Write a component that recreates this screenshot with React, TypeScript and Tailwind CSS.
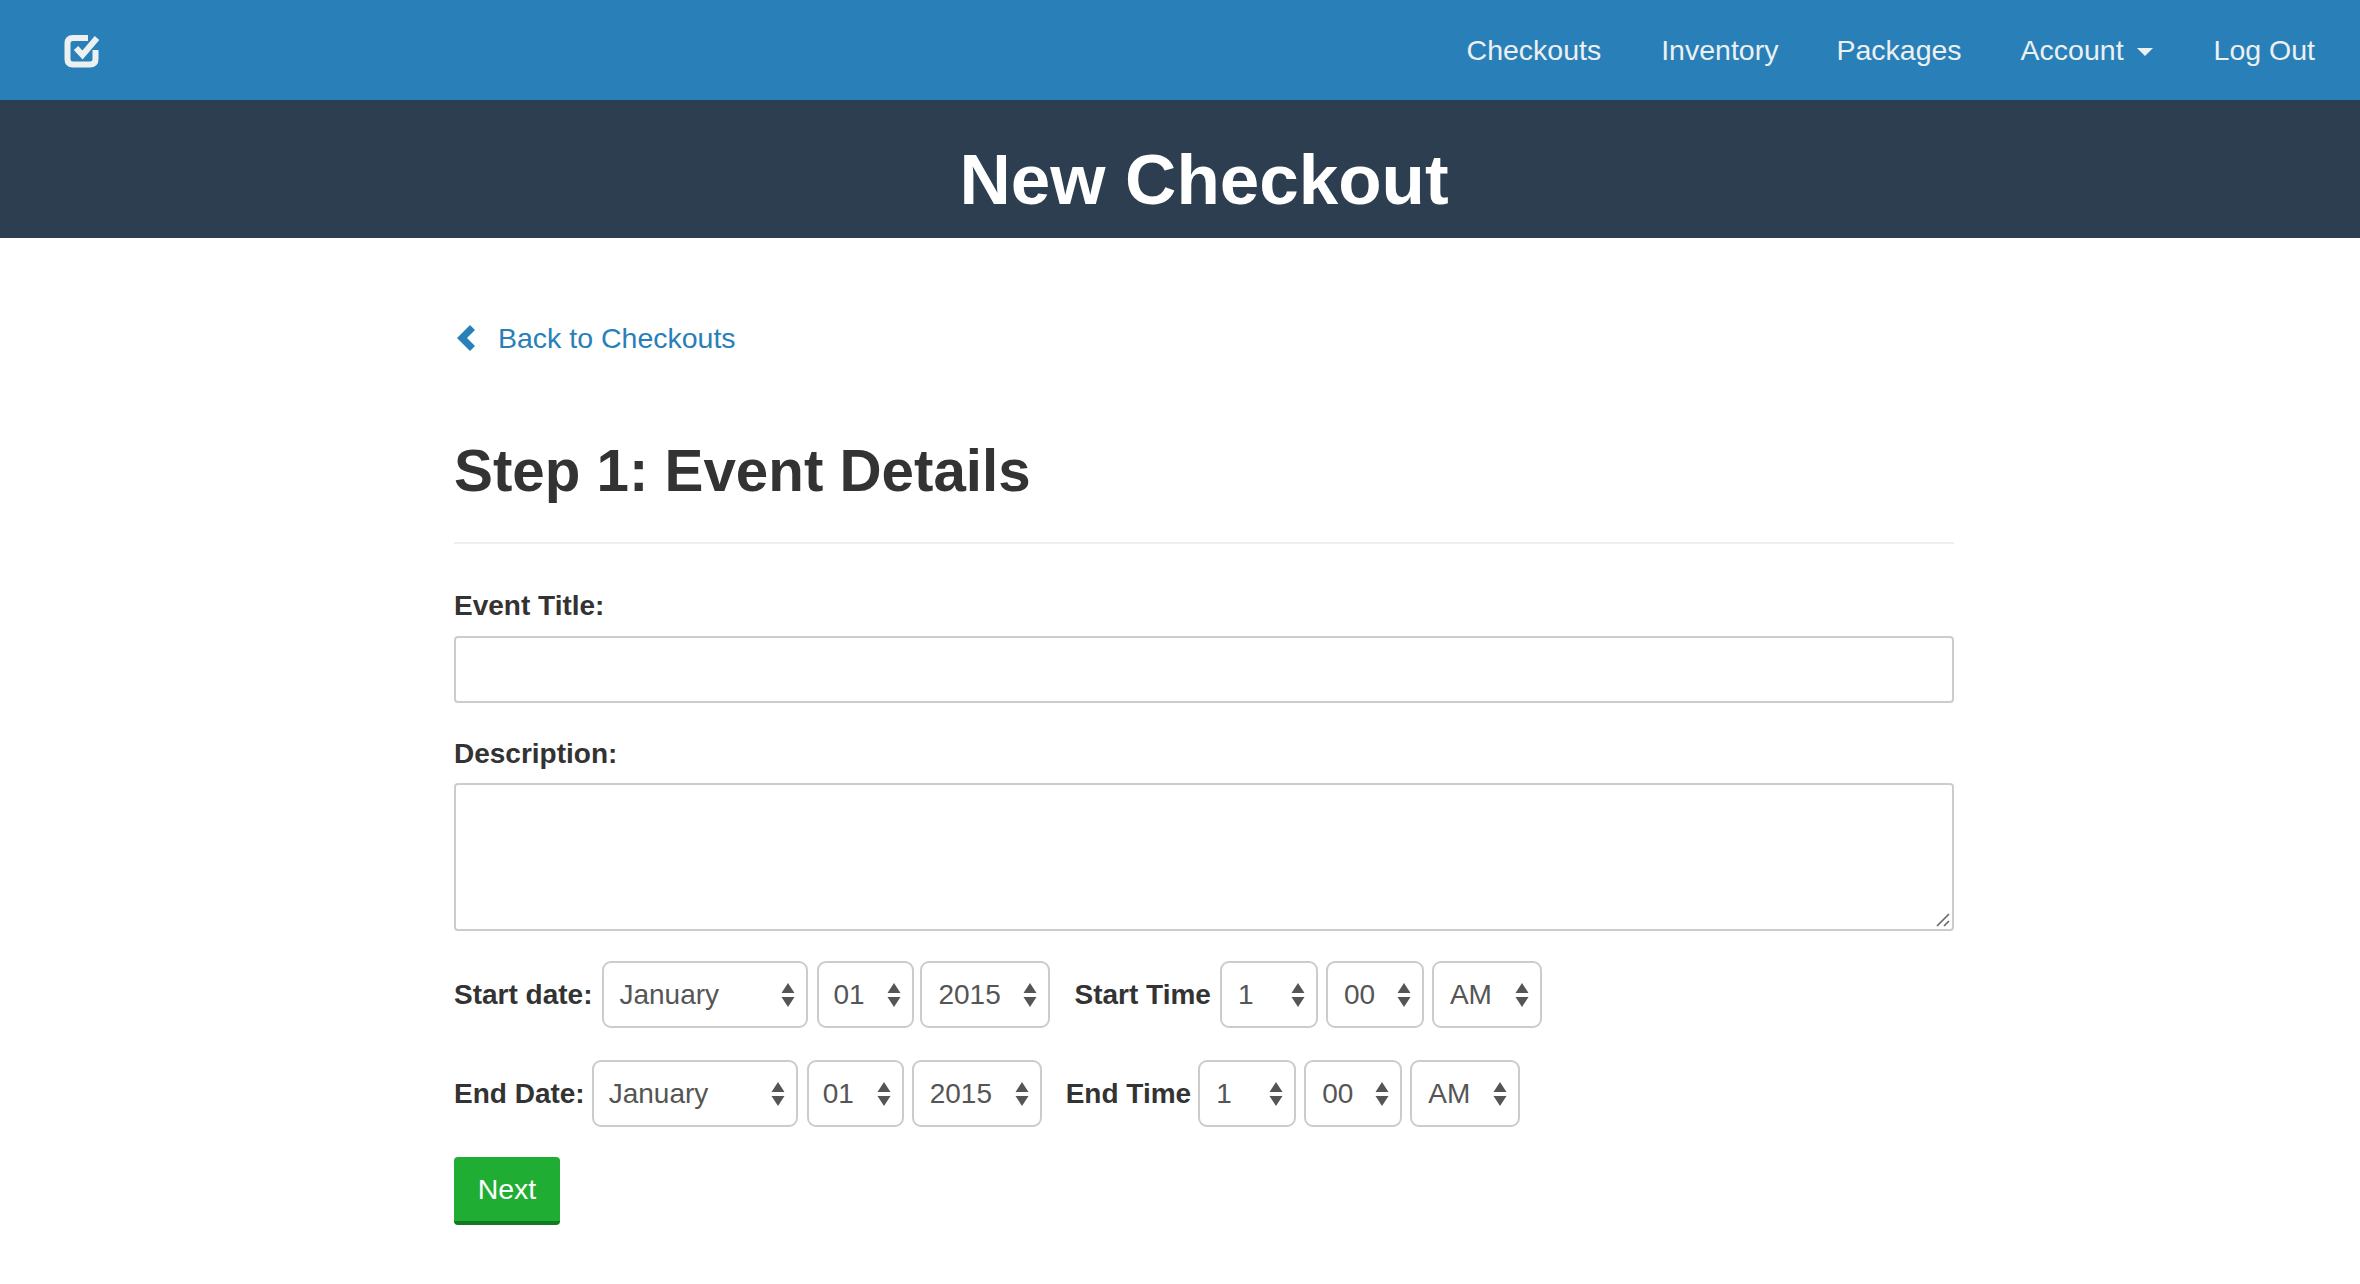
const font = "font-['Liberation_Sans',Arial,sans-serif]";

const months = ['January', 'February', 'March'];
const days = ['01', '02', '03'];
const years = ['2015', '2016'];
const hours = ['1', '2', '3'];
const mins = ['00', '15', '30', '45'];
const ampm = ['AM', 'PM'];

function Select({ options, className, pad = 'pl-[16px]' }: { options: string[]; className: string; pad?: string }) {
  return (
    <div className={`relative h-[67px] ${className}`}>
      <select className={`h-full w-full appearance-none rounded-[9px] border-2 border-[#cccccc] bg-white ${pad} text-[28px] text-[#555555] outline-none`}>
        {options.map(o => <option key={o}>{o}</option>)}
      </select>
      <svg className="pointer-events-none absolute right-[13px] top-[22px]" width="14" height="24" viewBox="0 0 14 24">
        <path d="M7 0 L13.5 10 H0.5 Z M0.5 14 H13.5 L7 24 Z" fill="#555555" />
      </svg>
    </div>
  );
}

function DateRow({ dateLabel, timeLabel, className, labelGap, yearClass, timeGap }: { dateLabel: string; timeLabel: string; className: string; labelGap: string; yearClass: string; timeGap: string }) {
  return (
    <div className={`flex items-center ${className}`}>
      <label className={`text-[28px] font-bold text-[#333333] ${labelGap}`}>{dateLabel}</label>
      <Select options={months} className="w-[206px]" pad="pl-[15px]" />
      <Select options={days} className="ml-[9px] w-[97px]" pad="pl-[14px]" />
      <Select options={years} className={yearClass} />
      <label className={`ml-[24px] text-[28px] font-bold text-[#333333] ${timeGap}`}>{timeLabel}</label>
      <Select options={hours} className="w-[98px]" />
      <Select options={mins} className="ml-[8px] w-[98px]" />
      <Select options={ampm} className="ml-[8px] w-[110px]" />
    </div>
  );
}

export default function App() {
  return (
    <div className={`min-h-[1284px] bg-white ${font}`}>
      <nav className="flex h-[100px] items-center justify-between bg-[#2980b9] pl-[63px] pr-[45px]">
        <svg className="mt-[2px]" width="38" height="36" viewBox="0 0 38 36" fill="none">
          <path d="M25 5 H10 Q4.5 5 4.5 10.5 V26 Q4.5 31.5 10 31.5 H27 Q32.5 31.5 32.5 26 V17" stroke="#ecf0f1" strokeWidth="6" />
          <path d="M13 15 L19.5 22 L34 5" stroke="#ecf0f1" strokeWidth="6" />
        </svg>
        <div className="flex items-center text-[28.5px] text-[#ecf0f1]">
          <a>Checkouts</a>
          <a className="ml-[60px]">Inventory</a>
          <a className="ml-[58px]">Packages</a>
          <a className="ml-[59px] flex items-center gap-[13px]">
            Account
            <span className="mt-[3px] h-0 w-0 border-x-[8px] border-t-[8px] border-x-transparent border-t-[#ecf0f1]" />
          </a>
          <a className="ml-[61px]">Log Out</a>
        </div>
      </nav>

      <header className="h-[138px] bg-[#2c3e50] pl-12 pt-[40px] text-center text-[71px] leading-[80px] font-bold text-white">
        <h1>New Checkout</h1>
      </header>

      <main className="pl-12">
        <div className="mx-auto w-[1500px]">
          <a className="mt-[80px] flex h-[40px] items-center text-[28.5px] text-[#2980b9]">
            <svg className="ml-[3px] mr-[23px]" width="18" height="26" viewBox="0 0 18 26">
              <path d="M13 0 L18 5 L10 13 L18 21 L13 26 L0 13 Z" fill="#2980b9" />
            </svg>
            Back to Checkouts
          </a>

          <h2 className="mt-[78px] text-[58.3px] leading-[70px] font-bold text-[#333333]">Step 1: Event Details</h2>
          <hr className="mt-[36px] border-t-2 border-[#eeeeee]" />

          <form>
            <label className="mt-[44px] block text-[28px] leading-[36px] font-bold text-[#333333]">Event Title:</label>
            <input type="text" className="mt-[12px] block h-[67px] w-full rounded-[4px] border-2 border-[#cccccc] bg-white outline-none" />

            <label className="mt-[33px] block text-[28px] leading-[36px] font-bold text-[#333333]">Description:</label>
            <div className="relative mt-[11px]">
              <textarea className="block h-[148px] w-full resize-none rounded-[4px] border-2 border-[#cccccc] bg-white outline-none" />
              <svg className="absolute bottom-[4px] right-[4px]" width="14" height="14" viewBox="0 0 14 14" stroke="#666666" strokeWidth="1.6">
                <path d="M1 13 L13 1 M8 13 L13 8" />
              </svg>
            </div>

            <DateRow dateLabel="Start date:" timeLabel="Start Time" className="mt-[30px]" labelGap="mr-[10px]" yearClass="ml-[6px] w-[130px]" timeGap="mr-[9px]" />
            <DateRow dateLabel="End Date:" timeLabel="End Time" className="mt-[32px]" labelGap="mr-[7px]" yearClass="ml-[8px] w-[130px]" timeGap="mr-[7px]" />

            <button type="button" className="mt-[30px] block h-[68px] w-[106px] rounded-[4px] border-b-[4px] border-[#127a24] bg-[#1fad33] text-[28.5px] text-white">
              Next
            </button>
          </form>
        </div>
      </main>
    </div>
  );
}
